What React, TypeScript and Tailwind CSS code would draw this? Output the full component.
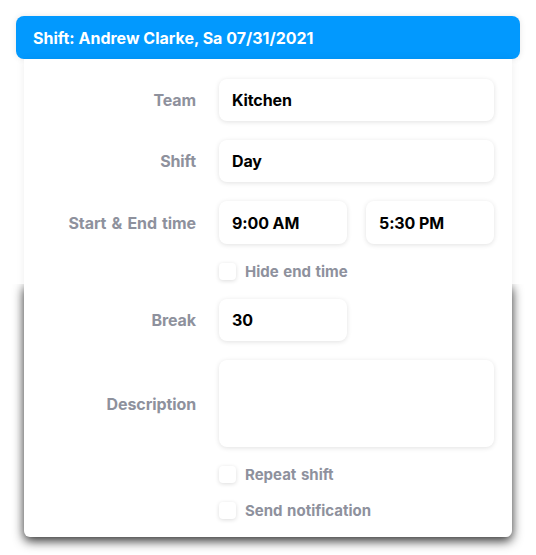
import React from "react";

const font = { fontFamily: "Inter, 'Open Sans', sans-serif" };

function Label({ children }: { children: React.ReactNode }) {
  return (
    <div className="w-[172px] shrink-0 text-right text-[16px] font-bold tracking-[-0.1px] text-[#8e919d] [word-spacing:1.5px]">
      {children}
    </div>
  );
}

function Field({ value, className }: { value?: string; className: string }) {
  return (
    <div
      className={`flex items-center rounded-lg bg-white pl-[13px] text-[16px] font-bold tracking-[-0.1px] text-black shadow-[0_1px_5px_rgba(0,0,0,0.12)] ${className}`}
    >
      {value}
    </div>
  );
}

function Check({ label }: { label: string }) {
  return (
    <div className="flex h-[17px] items-center pl-[195px]">
      <div className="h-[17px] w-[17px] rounded-[4px] bg-white shadow-[0_1px_4px_rgba(0,0,0,0.14)]" />
      <span className="ml-[9px] pt-px text-[15px] font-bold text-[#8e919d] [word-spacing:1px]">{label}</span>
    </div>
  );
}

export default function App() {
  return (
    <div className="h-[555px] w-[536px] bg-white px-4 pt-4" style={font}>
      <div className="flex h-[43px] items-center rounded-lg bg-[#0299fe] pl-[17px] text-[16px] font-bold text-white shadow-[0_0_6px_rgba(0,0,0,0.1)]">
        Shift: Andrew Clarke, Sa 07/31/2021
      </div>
      <div className="relative isolate mx-2 flex flex-col gap-[19px] rounded-b-md bg-white pb-[18px] pt-[20px] pr-[18px] shadow-[0_0_8px_rgba(0,0,0,0.07)] before:absolute before:inset-x-0 before:bottom-0 before:top-[225px] before:-z-10 before:rounded-b-md before:shadow-[0_4px_11px_rgba(0,0,0,0.8)] before:content-[''] before:[clip-path:inset(0px_-40px_-40px_-40px)]">
        <div className="flex items-center gap-[23px]">
          <Label>Team</Label>
          <Field value="Kitchen" className="h-[42px] w-[275px]" />
        </div>
        <div className="flex items-center gap-[23px]">
          <Label>Shift</Label>
          <Field value="Day" className="h-[42px] w-[275px]" />
        </div>
        <div className="flex items-center gap-[23px]">
          <Label>Start &amp; End time</Label>
          <div className="flex gap-[19px]">
            <Field value="9:00 AM" className="h-[43px] w-[128px]" />
            <Field value="5:30 PM" className="h-[43px] w-[128px]" />
          </div>
        </div>
        <Check label="Hide end time" />
        <div className="flex items-center gap-[23px]">
          <Label>Break</Label>
          <Field value="30" className="h-[42px] w-[128px]" />
        </div>
        <div className="flex items-center gap-[23px]">
          <Label>Description</Label>
          <Field className="h-[87px] w-[275px]" />
        </div>
        <Check label="Repeat shift" />
        <Check label="Send notification" />
      </div>
    </div>
  );
}
